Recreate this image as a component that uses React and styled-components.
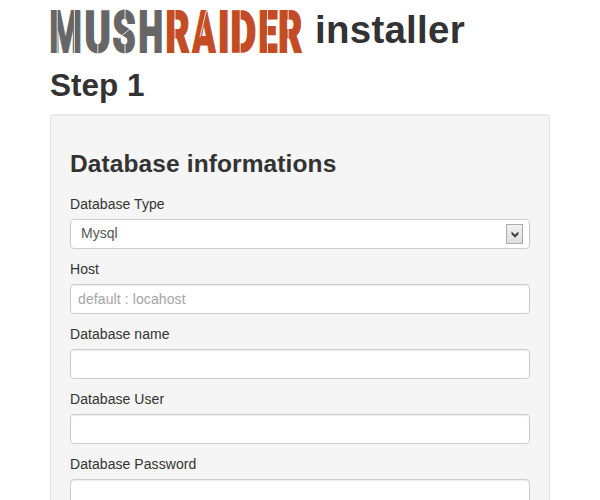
import React from "react";
import styled, { createGlobalStyle } from "styled-components";

const Global = createGlobalStyle`
  * { box-sizing: border-box; }
  html, body { margin: 0; height: 500px; overflow: hidden; background: #fff; }
  body { font: 14px/20px "Liberation Sans", Arial, sans-serif; color: #333; }
`;

const Page = styled.main`
  width: 500px;
  height: 500px;
  margin: 0 auto;
  overflow: hidden;
`;

const Brand = styled.h1`
  display: flex;
  align-items: flex-start;
  gap: 12px;
  height: 55px;
  margin: 0;
  padding-top: 10px;
  font-size: 38.5px;
  line-height: 40px;
  letter-spacing: 0.25px;
`;

const Logo = styled.svg`
  width: 253px;
  height: 70px;
  margin-top: -10px;
  flex: none;
  overflow: visible;
`;

const Glyph = styled.text`
  font: 900 57.4px Roboto, sans-serif;
  letter-spacing: 0;
  fill: ${(p) => p.$color};
  stroke: ${(p) => p.$color};
  stroke-width: 1.5px;
  vector-effect: non-scaling-stroke;
`;

const StepTitle = styled.h2`
  margin: 10px 0 9px;
  font-size: 31.5px;
  line-height: 40px;
`;

const Well = styled.section`
  min-height: 420px;
  padding: 19px;
  background: #f5f5f5;
  border: 1px solid #e3e3e3;
  border-radius: 4px;
  box-shadow: inset 0 1px 1px rgba(0, 0, 0, 0.05);
`;

const SectionTitle = styled.h3`
  margin: 10px 0;
  font-size: 24.5px;
  line-height: 40px;
  letter-spacing: 0.11px;
`;

const Field = styled.div`
  margin-bottom: 10px;
`;

const Label = styled.label`
  display: block;
  margin-bottom: 5px;
  letter-spacing: 0.06px;
`;

const Input = styled.input`
  display: block;
  width: 100%;
  height: 30px;
  padding: 4px 7px;
  font: inherit;
  letter-spacing: 0.1px;
  color: #555;
  background: #fff;
  border: 1px solid #ccc;
  border-radius: 4px;
  box-shadow: inset 0 1px 1px rgba(0, 0, 0, 0.075);
  &::placeholder { color: #a5a5a5; opacity: 1; }
`;

const Select = styled.div`
  display: flex;
  align-items: flex-start;
  justify-content: space-between;
  height: 30px;
  padding: 3px 6px 0 10px;
  color: #555;
  background: #fff;
  border: 1px solid #ccc;
  border-radius: 4px;
`;

const Arrow = styled.span`
  display: flex;
  align-items: center;
  justify-content: center;
  width: 17px;
  height: 20px;
  margin-top: 1px;
  border: 1px solid #adadad;
  background: linear-gradient(#f1f1f1, #dedede);
`;

const GREY = "#666";
const RUST = "#c34c25";

const letters = [
  ["M", -0.4, 0.64, GREY],
  ["U", 34.6, 0.69, GREY],
  ["S", 62.6, 0.64, GREY],
  ["H", 88.6, 0.605, GREY],
  ["R", 115.4, 0.645, RUST],
  ["A", 142.4, 0.585, RUST],
  ["I", 167.9, 0.66, RUST],
  ["D", 180.4, 0.69, RUST],
  ["E", 208.4, 0.59, RUST],
  ["R", 228.2, 0.64, RUST],
];

const stencilCuts =
  "M7.2 0V44M24.4 0V44M47.8 32V44M75 0V10M75 34V44M68 29L81 18M125 0V44M156.5 0L150 27M190.2 0V44M217.5 0V44M238.2 0V44";

function Wordmark() {
  return (
    <Logo viewBox="0 -10 253 70" role="img" aria-label="MushRaider">
      {letters.map(([char, x, scale, color], i) => (
        <Glyph key={i} $color={color} transform={`translate(${x} 42.4) scale(${scale} 1)`}>
          {char}
        </Glyph>
      ))}
      <path d={stencilCuts} stroke="#fff" strokeWidth="0.8" fill="none" />
    </Logo>
  );
}

const fields = [
  ["Host", "default : locahost"],
  ["Database name", ""],
  ["Database User", ""],
  ["Database Password", ""],
];

export default function App() {
  return (
    <Page>
      <Global />
      <Brand>
        <Wordmark />
        <span>installer</span>
      </Brand>
      <StepTitle>Step 1</StepTitle>
      <Well>
        <SectionTitle>Database informations</SectionTitle>
        <Field>
          <Label>Database Type</Label>
          <Select>
            Mysql
            <Arrow>
              <svg width="8" height="7" viewBox="0 0 8 7">
                <path d="M0.5 0.5L4 3.5L7.5 0.5V3.2L4 6.7L0.5 3.2Z" fill="#444" />
              </svg>
            </Arrow>
          </Select>
        </Field>
        {fields.map(([label, placeholder]) => (
          <Field key={label}>
            <Label>{label}</Label>
            <Input aria-label={label} placeholder={placeholder} />
          </Field>
        ))}
      </Well>
    </Page>
  );
}
